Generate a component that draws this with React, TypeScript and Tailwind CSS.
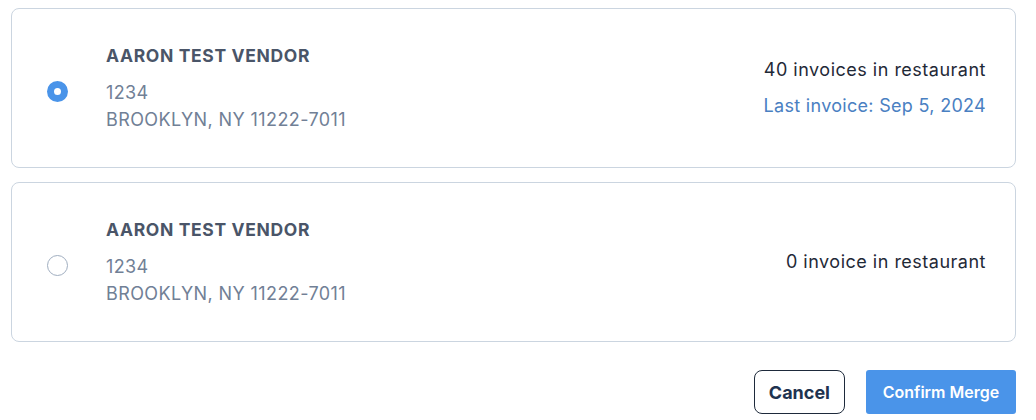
import React, { useState } from "react";

type Vendor = {
  id: number;
  name: string;
  street: string;
  city: string;
  invoices: string;
  lastInvoice?: string;
};

const vendors: Vendor[] = [
  {
    id: 1,
    name: "AARON TEST VENDOR",
    street: "1234",
    city: "BROOKLYN, NY 11222-7011",
    invoices: "40 invoices in restaurant",
    lastInvoice: "Last invoice: Sep 5, 2024",
  },
  {
    id: 2,
    name: "AARON TEST VENDOR",
    street: "1234",
    city: "BROOKLYN, NY 11222-7011",
    invoices: "0 invoice in restaurant",
  },
];

function Radio({ checked }: { checked: boolean }) {
  return checked ? (
    <span className="block w-[21px] h-[21px] rounded-full border-[7px] border-[#4a94e9] bg-white shrink-0" />
  ) : (
    <span className="block w-[21px] h-[21px] rounded-full border border-[#a0aec0] bg-white shrink-0" />
  );
}

export default function App() {
  const [selected, setSelected] = useState(1);

  return (
    <div className="w-[1036px] h-[420px] bg-white font-['Inter',sans-serif] pt-2 pl-[11px] pr-5">
      {/* Vendor cards */}
      <div className="flex flex-col gap-[14px]">
        {vendors.map((v) => (
          <div
            key={v.id}
            onClick={() => setSelected(v.id)}
            className="h-[160px] border border-[#cbd5e0] rounded-lg flex items-center pl-[35px] pr-[29px] cursor-pointer"
          >
            <div className="mt-[6px] shrink-0">
              <Radio checked={selected === v.id} />
            </div>
            <div className="ml-[38px] flex-1">
              <div className="text-[17.5px] font-bold text-[#4a5568] leading-6 tracking-[0.65px]">{v.name}</div>
              <div className="mt-[11px] text-[18px] text-[#718096] leading-[27px] tracking-[0.4px]">
                <div>{v.street}</div>
                <div>{v.city}</div>
              </div>
            </div>
            <div className="text-right text-[18px] leading-5">
              <div className="text-[#1f2937] tracking-[0.5px]">{v.invoices}</div>
              {v.lastInvoice && (
                <div className="mt-4 text-[#4a80c2] tracking-[0.3px]">{v.lastInvoice}</div>
              )}
            </div>
          </div>
        ))}
      </div>

      {/* Actions */}
      <div className="flex justify-end gap-[21px] mt-[28px]">
        <button className="h-[44px] px-[14px] rounded-lg border border-[#1e2a3b] text-[#1e3350] text-[18px] font-bold">
          Cancel
        </button>
        <button className="h-[44px] w-[150px] rounded-[3px] bg-[#4a94e9] text-white text-[16px] font-semibold">
          Confirm Merge
        </button>
      </div>
    </div>
  );
}
